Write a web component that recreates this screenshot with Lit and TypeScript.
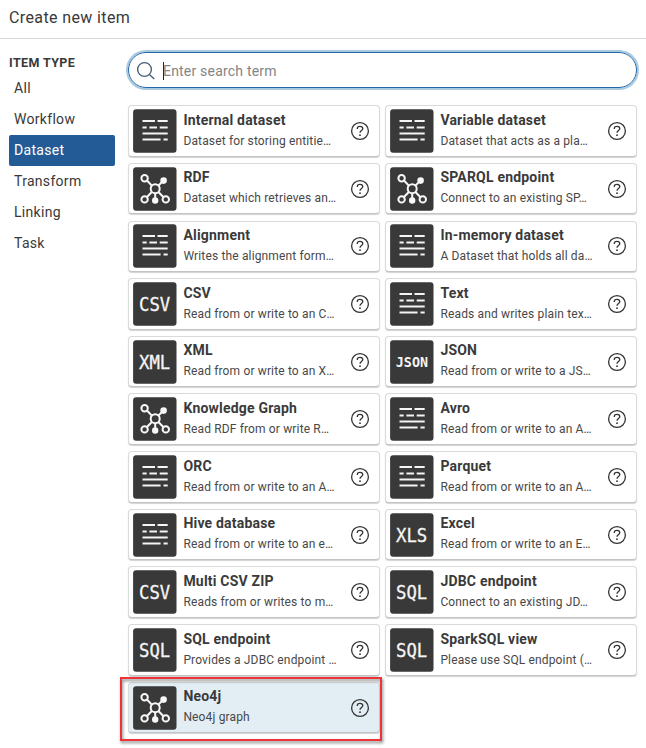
import { LitElement, html, css, svg } from "lit";
import { customElement, property } from "lit/decorators.js";
import { classMap } from "lit/directives/class-map.js";

type Kind = "data" | "graph" | "CSV" | "XML" | "JSON" | "XLS" | "SQL";
interface Item { icon: Kind; title: string; text: string; selected?: boolean; }

const ITEMS: Item[] = [
  { icon: "data", title: "Internal dataset", text: "Dataset for storing entitie…" },
  { icon: "data", title: "Variable dataset", text: "Dataset that acts as a pla…" },
  { icon: "graph", title: "RDF", text: "Dataset which retrieves an…" },
  { icon: "graph", title: "SPARQL endpoint", text: "Connect to an existing SP…" },
  { icon: "data", title: "Alignment", text: "Writes the alignment form…" },
  { icon: "data", title: "In-memory dataset", text: "A Dataset that holds all da…" },
  { icon: "CSV", title: "CSV", text: "Read from or write to an C…" },
  { icon: "data", title: "Text", text: "Reads and writes plain tex…" },
  { icon: "XML", title: "XML", text: "Read from or write to an X…" },
  { icon: "JSON", title: "JSON", text: "Read from or write to a JS…" },
  { icon: "graph", title: "Knowledge Graph", text: "Read RDF from or write R…" },
  { icon: "data", title: "Avro", text: "Read from or write to an A…" },
  { icon: "data", title: "ORC", text: "Read from or write to an A…" },
  { icon: "data", title: "Parquet", text: "Read from or write to an A…" },
  { icon: "data", title: "Hive database", text: "Read from or write to an e…" },
  { icon: "XLS", title: "Excel", text: "Read from or write to an E…" },
  { icon: "CSV", title: "Multi CSV ZIP", text: "Reads from or writes to m…" },
  { icon: "SQL", title: "JDBC endpoint", text: "Connect to an existing JD…" },
  { icon: "SQL", title: "SQL endpoint", text: "Provides a JDBC endpoint …" },
  { icon: "SQL", title: "SparkSQL view", text: "Please use SQL endpoint (…" },
  { icon: "graph", title: "Neo4j", text: "Neo4j graph", selected: true },
];

const TYPES = ["All", "Workflow", "Dataset", "Transform", "Linking", "Task"];

const dataGlyph = svg`
  <g stroke="#f4f4f4" stroke-width="2" fill="none">
    <path d="M9.5 12H22M24.5 12H34.7M9.5 18.5H13.7M16.4 18.5H24M26.7 18.5H34.7M9.5 24.5H34.7M9.5 30.5H27.6M30.5 30.5H34.7"/>
  </g>`;

const graphGlyph = svg`
  <g stroke="#f8f8f8" stroke-width="2" fill="none">
    <path d="M14 13.5L18.8 18.6M29 15L25.4 18.6M18.8 25L14 30M25.4 25L30.3 30M22.2 26V31"/>
    <circle cx="22.2" cy="21.7" r="4.5"/>
    <circle cx="11.6" cy="11.3" r="3.2"/>
    <circle cx="11.6" cy="32.4" r="3.2"/>
    <circle cx="32.8" cy="32.4" r="3.2"/>
    <circle cx="30.6" cy="13.6" r="2.3" fill="#f8f8f8"/>
    <circle cx="22.2" cy="33.5" r="2.2" fill="#f8f8f8"/>
  </g>`;

@customElement("item-card")
export class ItemCard extends LitElement {
  @property({ attribute: false }) item!: Item;

  static styles = css`
    :host { display: block; height: 100%; min-width: 0; }
    .card {
      box-sizing: border-box; height: 100%; display: flex; align-items: center;
      padding: 0 9.5px 0 3.5px; background: #fff; border-radius: 4px;
      border: 1px solid #d9dadb; border-bottom-color: #c2c4c5;
      box-shadow: 0 1px 1px rgba(30, 35, 40, 0.2);
    }
    .selected { background: #e3edf4; }
    .icon { flex: none; width: 44px; height: 44px; margin-right: 6.9px; }
    .icon text {
      font-family: "DejaVu Sans Mono", "Liberation Mono", monospace;
      fill: #f4f4f4; stroke: #f4f4f4; stroke-width: 0.35px;
    }
    .icon .small { font-weight: 700; stroke: none; }
    .copy { flex: 1; min-width: 0; white-space: nowrap; color: #3a3a3a; padding-bottom: 2.5px; }
    .title { font-size: 14px; line-height: 20px; font-weight: 700; letter-spacing: 0.2px; }
    .text { font-size: 12px; line-height: 18px; padding-top: 2px; letter-spacing: 0.15px; color: #484848; }
    .help { flex: none; width: 20px; height: 20px; }
  `;

  private glyph(kind: Kind) {
    if (kind === "data") return dataGlyph;
    if (kind === "graph") return graphGlyph;
    if (kind === "JSON")
      return svg`<text class="small" x="5.8" y="27.2" font-size="14.6" textLength="32.2" lengthAdjust="spacingAndGlyphs">JSON</text>`;
    return svg`<text x="6" y="29.4" font-size="20.2" textLength="31.2" lengthAdjust="spacingAndGlyphs">${kind}</text>`;
  }

  render() {
    const { icon, title, text, selected } = this.item;
    return html`
      <div class=${classMap({ card: true, selected: !!selected })}>
        <svg class="icon" viewBox="0 0 44 44">
          <rect x="0.1" y="0.3" width="43.4" height="43.4" rx="3" fill="#393939" />
          ${this.glyph(icon)}
        </svg>
        <div class="copy">
          <div class="title">${title}</div>
          <div class="text">${text}</div>
        </div>
        <svg class="help" viewBox="0 0 20 20" fill="none" stroke="#333">
          <circle cx="10" cy="10" r="8.4" stroke-width="1.3" />
          <path d="M7.3 8V7.4C7.3 6 8.4 5.3 10 5.3S12.8 6.1 12.8 7.6C12.8 9.5 10 9.5 10 11.8" stroke-width="1.3" />
          <circle cx="10" cy="14.2" r="0.9" fill="#333" stroke="none" />
        </svg>
      </div>`;
  }
}

@customElement("app-root")
export class AppRoot extends LitElement {
  static styles = css`
    :host {
      display: block; height: 748px; overflow: hidden; background: #fff; color: #393939;
      font-family: Roboto, "Liberation Sans", sans-serif;
    }
    .header {
      box-sizing: border-box; height: 39px; padding: 7px 9px 0; border-bottom: 1px solid #d8d8d8;
      font-size: 16px; line-height: 21px; letter-spacing: 0.38px;
    }
    .body { display: flex; align-items: flex-start; padding: 12px 9px 0; }
    .side { width: 106px; margin-right: 13px; flex: none; }
    .label { font-size: 12.5px; line-height: 16px; font-weight: 700; padding-top: 4px; letter-spacing: 0.4px; }
    .type {
      height: 31px; box-sizing: border-box; padding-left: 5px; border-radius: 2px;
      font-size: 14px; line-height: 31px; letter-spacing: 0.3px;
    }
    .list { padding-top: 2px; }
    .active { background: #235b97; color: #fff; }
    .main { flex: 1; min-width: 0; }
    .search {
      box-sizing: border-box; height: 36px; display: flex; align-items: center; padding: 2px 0 0 7px;
      border-radius: 18px; border: 1.5px solid #2467a8; box-shadow: 0 0 0 2px #a9c9df;
      margin-top: 0.5px; font-size: 14px; color: #858585; letter-spacing: 0.2px;
    }
    .lens { width: 20px; height: 20px; margin-right: 7px; }
    .caret { width: 1px; height: 18px; background: #222; margin-right: -1px; }
    .grid {
      display: grid; grid-template-columns: 252px 252px; grid-auto-rows: 51.65px;
      column-gap: 5px; row-gap: 6.03px; padding-top: 17.7px;
    }
    .cell { position: relative; }
    .marker {
      position: absolute; left: -8px; top: -5px; width: 262px; height: 64px; box-sizing: border-box;
      border: 2px solid #ec3338; pointer-events: none;
      filter: drop-shadow(1px 2px 1.5px rgba(0, 0, 0, 0.5));
    }
  `;

  render() {
    return html`
      <div class="header">Create new item</div>
      <div class="body">
        <div class="side">
          <div class="label">ITEM TYPE</div>
          <div class="list">
            ${TYPES.map((t) => html`<div class=${classMap({ type: true, active: t === "Dataset" })}>${t}</div>`)}
          </div>
        </div>
        <div class="main">
          <div class="search">
            <svg class="lens" viewBox="0 0 20 20" fill="none" stroke="#4b5f78" stroke-width="1.4">
              <circle cx="8.5" cy="8.5" r="6.9" /><path d="M13.4 13.4L18.3 18" />
            </svg>
            <span class="caret"></span>Enter search term
          </div>
          <div class="grid">
            ${ITEMS.map((item) => html`<div class="cell">
              <item-card .item=${item}></item-card>
              ${item.selected ? html`<div class="marker"></div>` : ""}
            </div>`)}
          </div>
        </div>
      </div>`;
  }
}
